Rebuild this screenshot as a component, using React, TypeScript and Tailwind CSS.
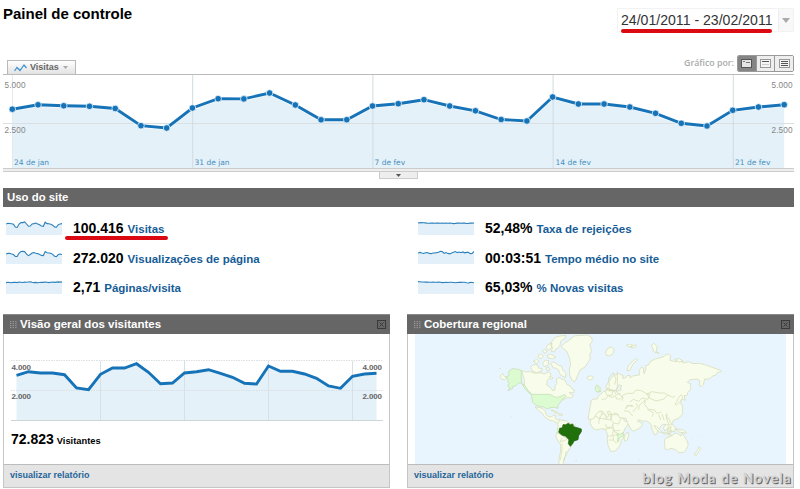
const VISITS = [
  109.2, 104.8, 105.8, 106.3, 108.5, 125.7, 128, 108, 98.7, 98.9, 93, 105, 119.8, 119.7, 106, 103.7,
  99.7, 106, 110.8, 119.5, 121, 97, 104, 104, 107, 113.3, 123.3, 126, 110.3, 107, 104.7,
];

const VISITORS = [
  375.3, 371.7, 373, 373, 374.7, 388, 389.7, 374.3, 368, 368, 363.7, 372.3, 383.7, 383, 373, 371.7,
  369.7, 373.3, 377.3, 383.3, 384, 366, 371.3, 371.3, 374, 378.3, 386, 388.3, 376.3, 374, 373.3,
];

const WEEKS = ['24 de jan', '31 de jan', '7 de fev', '14 de fev', '21 de fev'];

const WAVE = [3, 2.3, 2.5, 2.8, 3.2, 6, 6.4, 3, 1.5, 1.6, 1, 3, 5.2, 5, 3, 2.6, 2, 3, 3.8, 5, 5.3, 1.2, 2.6, 2.7, 3.2, 4.2, 5.9, 6.2, 3.6, 3, 2.6];
const PAGES = [4, 3.4, 3.2, 4, 4.6, 6.5, 6.4, 3, 1.5, 1.4, 1.6, 4.2, 5.6, 4.5, 3, 2.6, 3.2, 3.6, 4.6, 5.4, 5.6, 1.6, 2.8, 3, 3.3, 4.4, 6.2, 6.7, 4.6, 4, 4.6];
const FLAT = [2.6, 2.2, 2.5, 2.8, 2.4, 2.2, 2.6, 2, 2.2, 2.5, 2.1, 2.2, 2, 1.9, 2.3, 2.6, 2.4, 2.8, 2.5, 2.2, 2.4, 2, 2.2, 2.6, 2.2, 2, 2.4, 2.1, 1.9, 2.1, 1.9];
const BOUNCE = [1.7, 1.9, 1.6, 1.7, 1.9, 2.2, 2.3, 2.1, 2, 2.2, 2, 2.1, 2.3, 2, 2.3, 2.1, 2.2, 2.1, 2.3, 2.6, 2.4, 2.1, 2, 2.2, 2, 2.1, 2.5, 2.4, 2, 2.1, 2];
const TIME = [3, 2.4, 3, 3.5, 2.7, 2.6, 3.4, 3.8, 3, 2.9, 2.7, 2.2, 1.2, 1.5, 3.4, 2.6, 3.4, 3.9, 2.9, 2.2, 1.5, 2.6, 2, 2.7, 1.9, 2.8, 2.4, 2.2, 3.6, 3.5, 1.5];
const NEWV = [1.6, 1.8, 2, 2, 2.1, 2, 2.2, 2.2, 2, 2.3, 2.2, 2.1, 2.3, 2.6, 2.5, 2.3, 2.5, 2.2, 2.2, 2.5, 2.8, 2.5, 2.3, 2.4, 2.2, 2.3, 2.7, 3, 2.4, 2.5, 2.8];

const LEFT = [
  { value: '100.416', label: 'Visitas', data: WAVE, marked: true },
  { value: '272.020', label: 'Visualizações de página', data: PAGES },
  { value: '2,71', label: 'Páginas/visita', data: FLAT },
];

const RIGHT = [
  { value: '52,48%', label: 'Taxa de rejeições', data: BOUNCE },
  { value: '00:03:51', label: 'Tempo médio no site', data: TIME },
  { value: '65,03%', label: '% Novas visitas', data: NEWV },
];

function toPoints(data: number[], x0: number, step: number) {
  return data.map((y, i) => `${(x0 + i * step).toFixed(2)},${y}`).join(' ');
}

function Sparkline({ data }: { data: number[] }) {
  const pts = toPoints(data, 0, 56 / 30);
  return (
    <svg width="56" height="14" viewBox="0 0 56 14" className="shrink-0">
      <polygon points={`0,14 ${pts} 56,14`} fill="#e3f0f9" />
      <polyline points={pts} fill="none" stroke="#2b80bd" strokeWidth="1.1" />
    </svg>
  );
}

type Stat = { value: string; label: string; data: number[]; marked?: boolean };

function StatRow({ value, label, data, marked }: Stat) {
  return (
    <div className="flex h-[29.5px] items-center">
      <Sparkline data={data} />
      <div className="relative ml-[11px] flex items-baseline gap-1 whitespace-nowrap pt-px font-bold">
        <span className="text-[14px] text-black">{value}</span>
        <span className="text-[11.5px] text-[#165c96]">{label}</span>
        {marked && <span className="absolute -left-2 top-[16px] h-[4px] w-[103px] rounded-sm bg-[#db0a12]" />}
      </div>
    </div>
  );
}

function VisitsChart() {
  const pts = toPoints(VISITS, 12.3, 25.73);
  return (
    <svg width="791" height="93" viewBox="3 75 791 93" className="block">
      <polygon points={`12.3,168 ${pts} 784.2,168`} fill="#e4f1f9" />
      <path d="M3 123.5H794" stroke="#d9dfe2" />
      {WEEKS.map((w, i) => (
        <g key={w}>
          <path d={`M${12.5 + i * 180.2} 75V168`} stroke={i ? '#d2dbe0' : '#e3eaee'} />
          <text x={[14, 194.5, 374.5, 555.5, 735][i]} y="164.5" fontSize="7.5" fill="#4790c0" className="font-['DejaVu_Sans',sans-serif]">{w}</text>
        </g>
      ))}
      <polyline points={pts} fill="none" stroke="#fff" strokeOpacity=".6" strokeWidth="4.5" />
      <polyline points={pts} fill="none" stroke="#1673b8" strokeWidth="2.9" />
      {VISITS.map((y, i) => (
        <circle key={i} cx={12.3 + i * 25.73} cy={y} r="3.3" fill="#1673b8" stroke="#e9f4fb" strokeWidth=".8" />
      ))}
      <g fontSize="8.2" fill="#858585">
        <text x="4.5" y="87.500" textLength="21">5.000</text>
        <text x="4.5" y="132.500" textLength="21">2.500</text>
        <text x="771.5" y="87.500" textLength="21">5.000</text>
        <text x="771.5" y="132.500" textLength="21">2.500</text>
      </g>
    </svg>
  );
}

function VisitorsChart() {
  const pts = toPoints(VISITORS, 16.5, 12);
  return (
    <svg width="372" height="64" viewBox="11 358 372 64" className="block">
      <polygon points={`16.5,420 ${pts} 376.5,420`} fill="#e4f1f9" />
      <path d="M11 360.5H383M11 390.5H383" stroke="#dadfe2" strokeDasharray="1.5 1" />
      <path d="M100.5 361V420M184.5 361V420M268.5 361V420M352.5 361V420" stroke="#d6e0e6" />
      <path d="M11 420.5H383" stroke="#cfd4d6" />
      <polyline points={pts} fill="none" stroke="#1673b8" strokeWidth="2.9" />
      <g fontSize="8" fontWeight="bold" fill="#666">
        <text x="11.5" y="369.8" textLength="19.5">4.000</text>
        <text x="11.5" y="399.3" textLength="19.5">2.000</text>
        <text x="362.5" y="369.8" textLength="19.5">4.000</text>
        <text x="362.5" y="399.3" textLength="19.5">2.000</text>
      </g>
    </svg>
  );
}

function WorldMap() {
  return (
    <svg width="371" height="130" viewBox="45 78 1113 390" className="block">
      <rect x="45" y="78" width="1113" height="390" fill="#e8f5fe" />
      <g fill="#f8fdeb" stroke="#d8ddba" strokeWidth="2.4" strokeLinejoin="round">
        {/* Canada and the arctic islands */}
        <path d="M365 188l12 4 14-1 12 5 18-2 12 4 12-6 8 5-3 12-8 8-2 14 12 8 6 9 7-2 0-12 6-8-2-12 8-6 10 6 8 2 6 14 10 4 4 8 8 4-2 8-14 0 8 6 6 2-8 8-10-2-14 8-12-4-14 2-8-8-56 0-10-14-16-14 0-22z" />
        <path d="M392 178l8-8 12 0 4 10 10 2-2 8-14 4-14-6zM400 160l10-6 8 6-8 6zM414 142l8-4 8 6-6 8-8-2zM428 166l8-10 10 2-2 14-10 4zM426 130l8-6 8 4-6 8zM438 180l8-2 4 8-8 2zM442 142l10-4 10 6 6 4-10 4-14-2zM438 118l8-10 10-2-2 14-8 6zM452 166l8-4 8 4 8 6 8 2 6 14 8 8-2 12-10-4-8-8-2-10-8-6-8 0zM456 100l10-12 14-4 18-2-4 10-12 8-2 12-6 8-8 4-2 8-10-2 4-12-6-6zM447 208l6-3 6 5-6 4z" />
        {/* Greenland, Iceland */}
        <path d="M483 116l12-12 14-8 12-12 22-2 20-1 12 8 2 10-8 12 6 16-6 14 2 12-10 14-6 10-14 8-6 12-6 16-6 9-8-6-6-16-1-16 4-14-4-22-8-18zM561 208l6-4 10 0 4 6-8 6-9-2z" />
        {/* Central America */}
        <path d="M405 297l16 2 8 4 6 6 4 12 8 6 10-2 4-4 6 0-2 8 4 6 10 0 2 10 8 4-4 2-12-5-10-6-14-4-14-8-8-12-8-6zM453 306l10 2 10 6-8 0zM474 317l10 0 5 4-12 1z" />
        {/* South America */}
        <path d="M474 343l8-7 16 2 8 6 6 2 14 6-18 10-12 0-10 12 4 12 14 6 10 22-12 18-4 12-6 6-2 16-4 12 2 8-8-4-4-10 2-24 4-20 0-18-10-14-5-12 6-14z" />
        <path d="M470 365l10-6M468 374l14 4M486 390l-6 12 22-8M486 406l0 20-5 30M498 430l-5 28" fill="none" />
        {/* Africa */}
        <path d="M582 302l14-8 20-1 4 8 12 4 14-2 12 4 6 10 6 16 6 8 12-2-6 14-8 10-4 12 2 12-8 10-2 12-8 12-8 8-14 1-8-18-2-16 0-18-6-14-12-2-16 4-10-6-8-14 2-14zM676 378l8-6 2 10-6 16-6 1-2-10z" />
        <path d="M587 300l6 10 12 0 8-14M576 330l12-6 10 8 8-16 0-16M596 348l2-18 20 4 0-18 4-14M618 334l14 2 2-30M604 318l18 0 14 2 22 0M634 320l0 18 10 8 12 2 6-16M618 348l0 10 18 0 4-14M612 365l22-6 8 10 18-2M622 384l14 0 4-16M626 396l14 0 0-14 14-2M640 396l10 10M638 350l6 22 14 6" fill="none" />
        {/* Europe and Asia */}
        <path d="M574 276l8-3 10 0 2-8 8-6 8-8 8-2 2-7 6-2 2 8 10 0 6-2 6 4 14-4-4-8 6-4-8-4-4 3-4 10-8 8-6-6-8 4-6-2-4-12 8-14 8-12 10-8 12-4 14 6-2 8 10-2 4-7 8 1 0 7 8-6 20-3 0-14 6-10 6 4 2 16 6-14-2-10 10-2 4-10 16-8 22-6 16-10 8 6-2 14 18 4 12-4 10 8 16-4 12 6 20-1 16 4 18 6 10 4 18 6 4 5-12 2-4 8-12 4-8 8-14 0-4 16-8 8-4-6 2-12-8-6-22 2-8 8 10 4 0 16-8 10-4 10-8 0 4 14-8-4-4 4-2 8 6 10 0 22-12 14-16 6-4 10 10 12-2 12-8-2-8-10 0 12 10 18-4 2-8-12-4-16-6-14-8 0-14 16-4 14-6 2-8-18-4-16-12-8-14 0-10-4-4 4 16 8-6 12-20 10-8-2-12-24-4-12-20-2-4-10-10-4-8 6-8-12-6 2 4 12-4 6-8-12-8-8-10 2-8 8-6 12-12 4-6-2z" />
        <path d="M590 240l6-6 6 6 1 10-9 3zM681 188l4-14 14-16 10-6 4 3-15 14-8 18zM618 132l4-10 12-5 8 7-2 12-12 8-10-3zM679 112l10-4 8 4-8 5zM690 118l16-8 4 5-10 5zM754 112l8-6 10 10-4 14 10 6-16-4-4-12zM824 154l14-2 12 8-14 2zM836 268l8-8 4 8-7 12-12 12-4-4 6-8z" />
        {/* country borders */}
        <path d="M605 274l12-1 8-10 11 6 10-6 4 10 12 0M616 250l4 12 16 0 2-14M622 242l20 6 6 12 14-4M628 238l-2-28 14-16M640 194l8 20-4 16M652 190l0 48-4 12 10 8 12 14M666 278l2-16 14-6 18 0 8-10 16 2 14 8 12 4-6 14-18-4-10 10-16-6-10 8M698 292l-12 0-8 10M710 286l2 10-14 16M736 276l-18 16-2 14M740 259l16-8 22 4 18 0 6 6-10 12-24 6-18-8-10-12M736 276l-2 14 12 14 18 2 6 10 14-4M802 260l16 8 8-4M742 304l20 12M760 318l-4 8M782 336l-6-16M676 302l6-10 18 4M672 308l14 2 12 14M792 336l-6-18" fill="none" />
        {/* South-east Asia and Oceania */}
        <path d="M762 352l8 4 12 12 6 5-8 0-12-10zM788 374l14 1 8 3-16 0zM790 358l10-9 6 3-4 12-8 5zM806 360l8-4-3 8 5 8-8-2zM800 334l6-4 4 10 5 10-7 1zM826 362l10 2 14 2 10 9-12-1-10-2zM793 395l8-6 16-6 8-8 10 3 8 6 4-10 6 12 8 12 4 12-6 14-10 10-14-1-8-8-14-4-10 4-8-2-1-14zM898 416l3 8-5 6-7 12-7-2 8-10zM800 332l-2-10 3-5z" />
        <path d="M300 204l8-8 2 6 10 8-6 6-10-4zM298 181l5 2M334 326l2 1M873 390l2 1M904 382l2 1M715 454l3 1M526 459l5-1" />
      </g>
      <g fill="#dcfbd0" stroke="#c4ddb5" strokeWidth="2.2" strokeLinejoin="round">
        <path d="M326 190l10-8 14 1 14 4 0 38-8 0-8 8-10 2 0 6-15 7 8-9-8-4 4-8-4-8 2-6-8-6 10-4zM365 226l10 6 8 14 10 12-4-1-15-16z" />
        <path d="M394 259h56l10 6 10 4 16-6 8-4 4 6-12 10-6 10-6 6 0 10-10-3-12 1-12 4-8-6-14-2-12-4-8-8z" />
        <path d="M586 236l6-6 4 8 4 12-10 2-4-8z" />
        <path d="M650 378l8 2 10-6 2 9-12 8-2 10-4 1 2-14z" />
      </g>
      <path d="M479 361l8-2 2-9 8 0 8-4 6 4 7-2 3 8 14 4 9 3 0 8-8 12-2 12-12 4-4 8-7 8-6-8 2-12-10-10-12-4-9-8z" fill="#20710c" stroke="#185c08" strokeWidth="2" />
    </svg>
  );
}

function PanelHeader({ title }: { title: string }) {
  return (
    <div className="flex h-[20px] items-center border-t border-[#8a8a8a] bg-[#666] pl-[7px] pr-1">
      <svg width="7" height="8" viewBox="0 0 7 8" fill="#999">
        {[0, 2.6, 5.2].map(x => [0, 2, 4, 6].map(y => <rect key={`${x}-${y}`} x={x} y={y} width="1.3" height="1.2" />))}
      </svg>
      <h2 className="ml-[3px] text-[11.5px] font-bold text-white">{title}</h2>
      <svg width="9" height="9" viewBox="0 0 9 9" className="ml-auto" fill="none" stroke="#3a3a3a">
        <rect x=".5" y=".5" width="8" height="8" />
        <path d="M2.5 2.5l4 4M6.5 2.5l-4 4" />
      </svg>
    </div>
  );
}

function PanelFooter() {
  return (
    <div className="flex h-[23px] items-center border-t border-[#bcbcbc] bg-[#e4e4e4] pb-px pl-[6px] text-[9px] font-bold text-[#25659a]">
      visualizar relatório
    </div>
  );
}

export default function App() {
  return (
    <div className="h-[489px] w-[800px] overflow-hidden bg-white pl-[3px] font-['Liberation_Sans',Arial,sans-serif] leading-none">
      <header className="flex h-[54px] w-[791px] items-start justify-between">
        <h1 className="pt-[6px] text-[15px] font-bold text-black">Painel de controle</h1>
        <div className="mt-2 flex h-[24px] border border-[#f2f2f2]">
          <div className="relative w-[160px] whitespace-nowrap pl-[3px] pt-[4px] text-[14.1px] text-[#333]">
            24/01/2011 - 23/02/2011
            <span className="absolute left-[3px] top-[20px] h-[4px] w-[151px] rounded-sm bg-[#db0a12]" />
          </div>
          <div className="flex w-[15px] items-center justify-center border-l border-[#eee] bg-[#f8f8f8]">
            <svg width="8" height="5" viewBox="0 0 8 5"><path d="M0 0h8L4 5z" fill="#aaa" /></svg>
          </div>
        </div>
      </header>

      <div className="flex h-[20px] w-[791px] items-end justify-between">
        <div className="ml-1 flex h-[14px] w-[69px] items-center border border-b-0 border-[#b9b9b9] bg-gradient-to-b from-white to-[#e2e2e2] pl-[6px] text-[9px] font-bold text-[#666]">
          <svg width="13" height="8" viewBox="0 0 13 8" fill="none" stroke="#3d91d0" strokeWidth="1.2"><path d="M.5 7l2.5-3.500 3 3L10 1l2.500 3" /></svg>
          <span className="ml-[3px]">Visitas</span>
          <svg width="5" height="3" viewBox="0 0 5 3" className="ml-[4px]"><path d="M0 0h5L2.500 3z" fill="#aaa" /></svg>
        </div>
        <div className="flex h-full items-center gap-[3px] pb-[2px]">
          <span className="font-['Open_Sans',sans-serif] text-[8.8px] font-semibold text-[#aaa]">Gráfico por:</span>
          <div className="flex h-[17px] w-[57px] overflow-hidden rounded-[2px] border border-[#999]">
            <div className="flex flex-1 items-center justify-center bg-[#858585]">
              <svg width="11" height="9" viewBox="0 0 11 9"><rect x=".5" y=".5" width="10" height="8" fill="#e4e4e4" stroke="#555" /><path d="M2 2.500h2M5 3.500h4" stroke="#777" /></svg>
            </div>
            <div className="flex flex-1 items-center justify-center border-l border-[#999] bg-[#eee]">
              <svg width="11" height="9" viewBox="0 0 11 9"><rect x=".5" y=".5" width="10" height="8" fill="#f5f5f5" stroke="#999" /><path d="M2 2.500h7" stroke="#555" /><path d="M2 5.500h7" stroke="#ccc" /></svg>
            </div>
            <div className="flex flex-1 items-center justify-center border-l border-[#999] bg-[#eee]">
              <svg width="11" height="9" viewBox="0 0 11 9"><rect x=".5" y=".5" width="10" height="8" fill="#f5f5f5" stroke="#999" /><path d="M2 2.500h7M2 4.500h7M2 6.500h7" stroke="#555" /></svg>
            </div>
          </div>
        </div>
      </div>

      <div className="w-[791px] border-t border-[#bbb]"><VisitsChart /></div>
      <div className="h-[4px] w-[791px] border-y border-[#ccc] bg-[#eee]" />
      <div className="ml-[376px] flex h-[7px] w-[39px] items-center justify-center border border-t-0 border-[#ccc] bg-[#eee]">
        <svg width="5" height="3" viewBox="0 0 5 3"><path d="M0 0h5L2.500 3z" fill="#555" /></svg>
      </div>

      <section className="mt-[9px] w-[791px]">
        <h2 className="flex h-[19px] items-center bg-[#666] pl-1 text-[11.4px] font-bold text-white">Uso do site</h2>
        <div className="flex h-[107px] pl-[3px] pt-[6px]">
          <div className="w-[412px]">{LEFT.map(s => <StatRow key={s.label} {...s} />)}</div>
          <div>{RIGHT.map(s => <StatRow key={s.label} {...s} />)}</div>
        </div>
      </section>

      <div className="flex gap-[17px]">
        <section className="w-[387px]">
          <PanelHeader title="Visão geral dos visitantes" />
          <div className="border border-t-0 border-[#c5c5c5]">
            <div className="h-[130px] pl-[7px] pt-6">
              <VisitorsChart />
              <div className="flex items-baseline gap-[3px] pt-[10px] font-bold text-black">
                <span className="text-[14px]">72.823</span>
                <span className="text-[9.3px]">Visitantes</span>
              </div>
            </div>
            <PanelFooter />
          </div>
        </section>
        <section className="relative w-[387px]">
          <PanelHeader title="Cobertura regional" />
          <div className="border border-t-0 border-[#c5c5c5]">
            <div className="pl-[7px]"><WorldMap /></div>
            <PanelFooter />
          </div>
          <svg width="154" height="22" viewBox="0 0 154 22" className="absolute -bottom-[3px] right-0">
            <g fontSize="13.500" className="font-['Lato',sans-serif]">
              <text x="3.500" y="14.500" textLength="148" fill="#555" stroke="#666" strokeWidth=".5">blog Moda de Novela</text>
              <text x="2.500" y="13.500" textLength="148" fill="#ddd" stroke="#ccc" strokeWidth=".5">blog Moda de Novela</text>
            </g>
          </svg>
        </section>
      </div>
    </div>
  );
}
